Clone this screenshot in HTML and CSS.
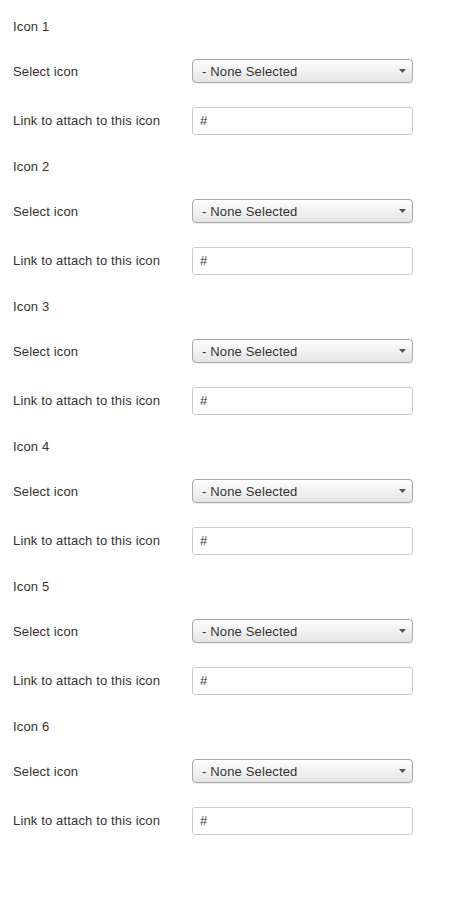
FILE: index.html
```html
<!DOCTYPE html>
<html lang="en">
<head>
<meta charset="utf-8">
<title>Icons</title>
<link rel="stylesheet" href="styles.css">
</head>
<body>
<form class="form">
  <div class="block">
    <div class="heading">Icon 1</div>
    <div class="row row-select">
      <label class="label">Select icon</label>
      <div class="select"><span>- None Selected</span><svg class="arrow" width="7" height="4" viewBox="0 0 7 4"><path d="M0 0H7L3.5 4Z" fill="#555"/></svg></div>
    </div>
    <div class="row row-link">
      <label class="label">Link to attach to this icon</label>
      <div class="input">#</div>
    </div>
  </div>
  <div class="block">
    <div class="heading">Icon 2</div>
    <div class="row row-select">
      <label class="label">Select icon</label>
      <div class="select"><span>- None Selected</span><svg class="arrow" width="7" height="4" viewBox="0 0 7 4"><path d="M0 0H7L3.5 4Z" fill="#555"/></svg></div>
    </div>
    <div class="row row-link">
      <label class="label">Link to attach to this icon</label>
      <div class="input">#</div>
    </div>
  </div>
  <div class="block">
    <div class="heading">Icon 3</div>
    <div class="row row-select">
      <label class="label">Select icon</label>
      <div class="select"><span>- None Selected</span><svg class="arrow" width="7" height="4" viewBox="0 0 7 4"><path d="M0 0H7L3.5 4Z" fill="#555"/></svg></div>
    </div>
    <div class="row row-link">
      <label class="label">Link to attach to this icon</label>
      <div class="input">#</div>
    </div>
  </div>
  <div class="block">
    <div class="heading">Icon 4</div>
    <div class="row row-select">
      <label class="label">Select icon</label>
      <div class="select"><span>- None Selected</span><svg class="arrow" width="7" height="4" viewBox="0 0 7 4"><path d="M0 0H7L3.5 4Z" fill="#555"/></svg></div>
    </div>
    <div class="row row-link">
      <label class="label">Link to attach to this icon</label>
      <div class="input">#</div>
    </div>
  </div>
  <div class="block">
    <div class="heading">Icon 5</div>
    <div class="row row-select">
      <label class="label">Select icon</label>
      <div class="select"><span>- None Selected</span><svg class="arrow" width="7" height="4" viewBox="0 0 7 4"><path d="M0 0H7L3.5 4Z" fill="#555"/></svg></div>
    </div>
    <div class="row row-link">
      <label class="label">Link to attach to this icon</label>
      <div class="input">#</div>
    </div>
  </div>
  <div class="block">
    <div class="heading">Icon 6</div>
    <div class="row row-select">
      <label class="label">Select icon</label>
      <div class="select"><span>- None Selected</span><svg class="arrow" width="7" height="4" viewBox="0 0 7 4"><path d="M0 0H7L3.5 4Z" fill="#555"/></svg></div>
    </div>
    <div class="row row-link">
      <label class="label">Link to attach to this icon</label>
      <div class="input">#</div>
    </div>
  </div>
</form>
</body>
</html>
```

FILE: styles.css
```css
html, body {
  margin: 0;
  padding: 0;
  background: #ffffff;
}

body {
  font-family: "Liberation Sans", Arial, Helvetica, sans-serif;
  font-size: 13px;
  color: #333333;
  letter-spacing: 0.15px;
}

.form {
  display: flex;
  flex-direction: column;
  margin: 0;
  padding: 12px 0 0 13px;
}

.block {
  display: flex;
  flex-direction: column;
  padding-bottom: 17px;
}

.heading {
  height: 28px;
  display: flex;
  align-items: center;
}

.row {
  display: flex;
  align-items: center;
  height: 28px;
}

.row-select {
  margin-top: 17px;
}

.row-link {
  margin-top: 22px;
}

.label {
  width: 179px;
  flex: none;
}

.row-link .label {
  padding-bottom: 2px;
}

.select {
  box-sizing: border-box;
  width: 221px;
  height: 24px;
  display: flex;
  align-items: center;
  justify-content: space-between;
  padding: 0 6px 0 9px;
  border: 1px solid #a9a9a9;
  border-radius: 4px;
  background: linear-gradient(#ffffff, #e4e4e4);
  box-shadow: 0 1px 1px rgba(0, 0, 0, 0.08);
  color: #333333;
}

.arrow {
  display: block;
  flex: none;
}

.input {
  box-sizing: border-box;
  width: 221px;
  height: 28px;
  display: flex;
  align-items: center;
  padding: 0 7px 2px;
  border: 1px solid #cccccc;
  border-radius: 3px;
  background: #ffffff;
  color: #333333;
}
```
